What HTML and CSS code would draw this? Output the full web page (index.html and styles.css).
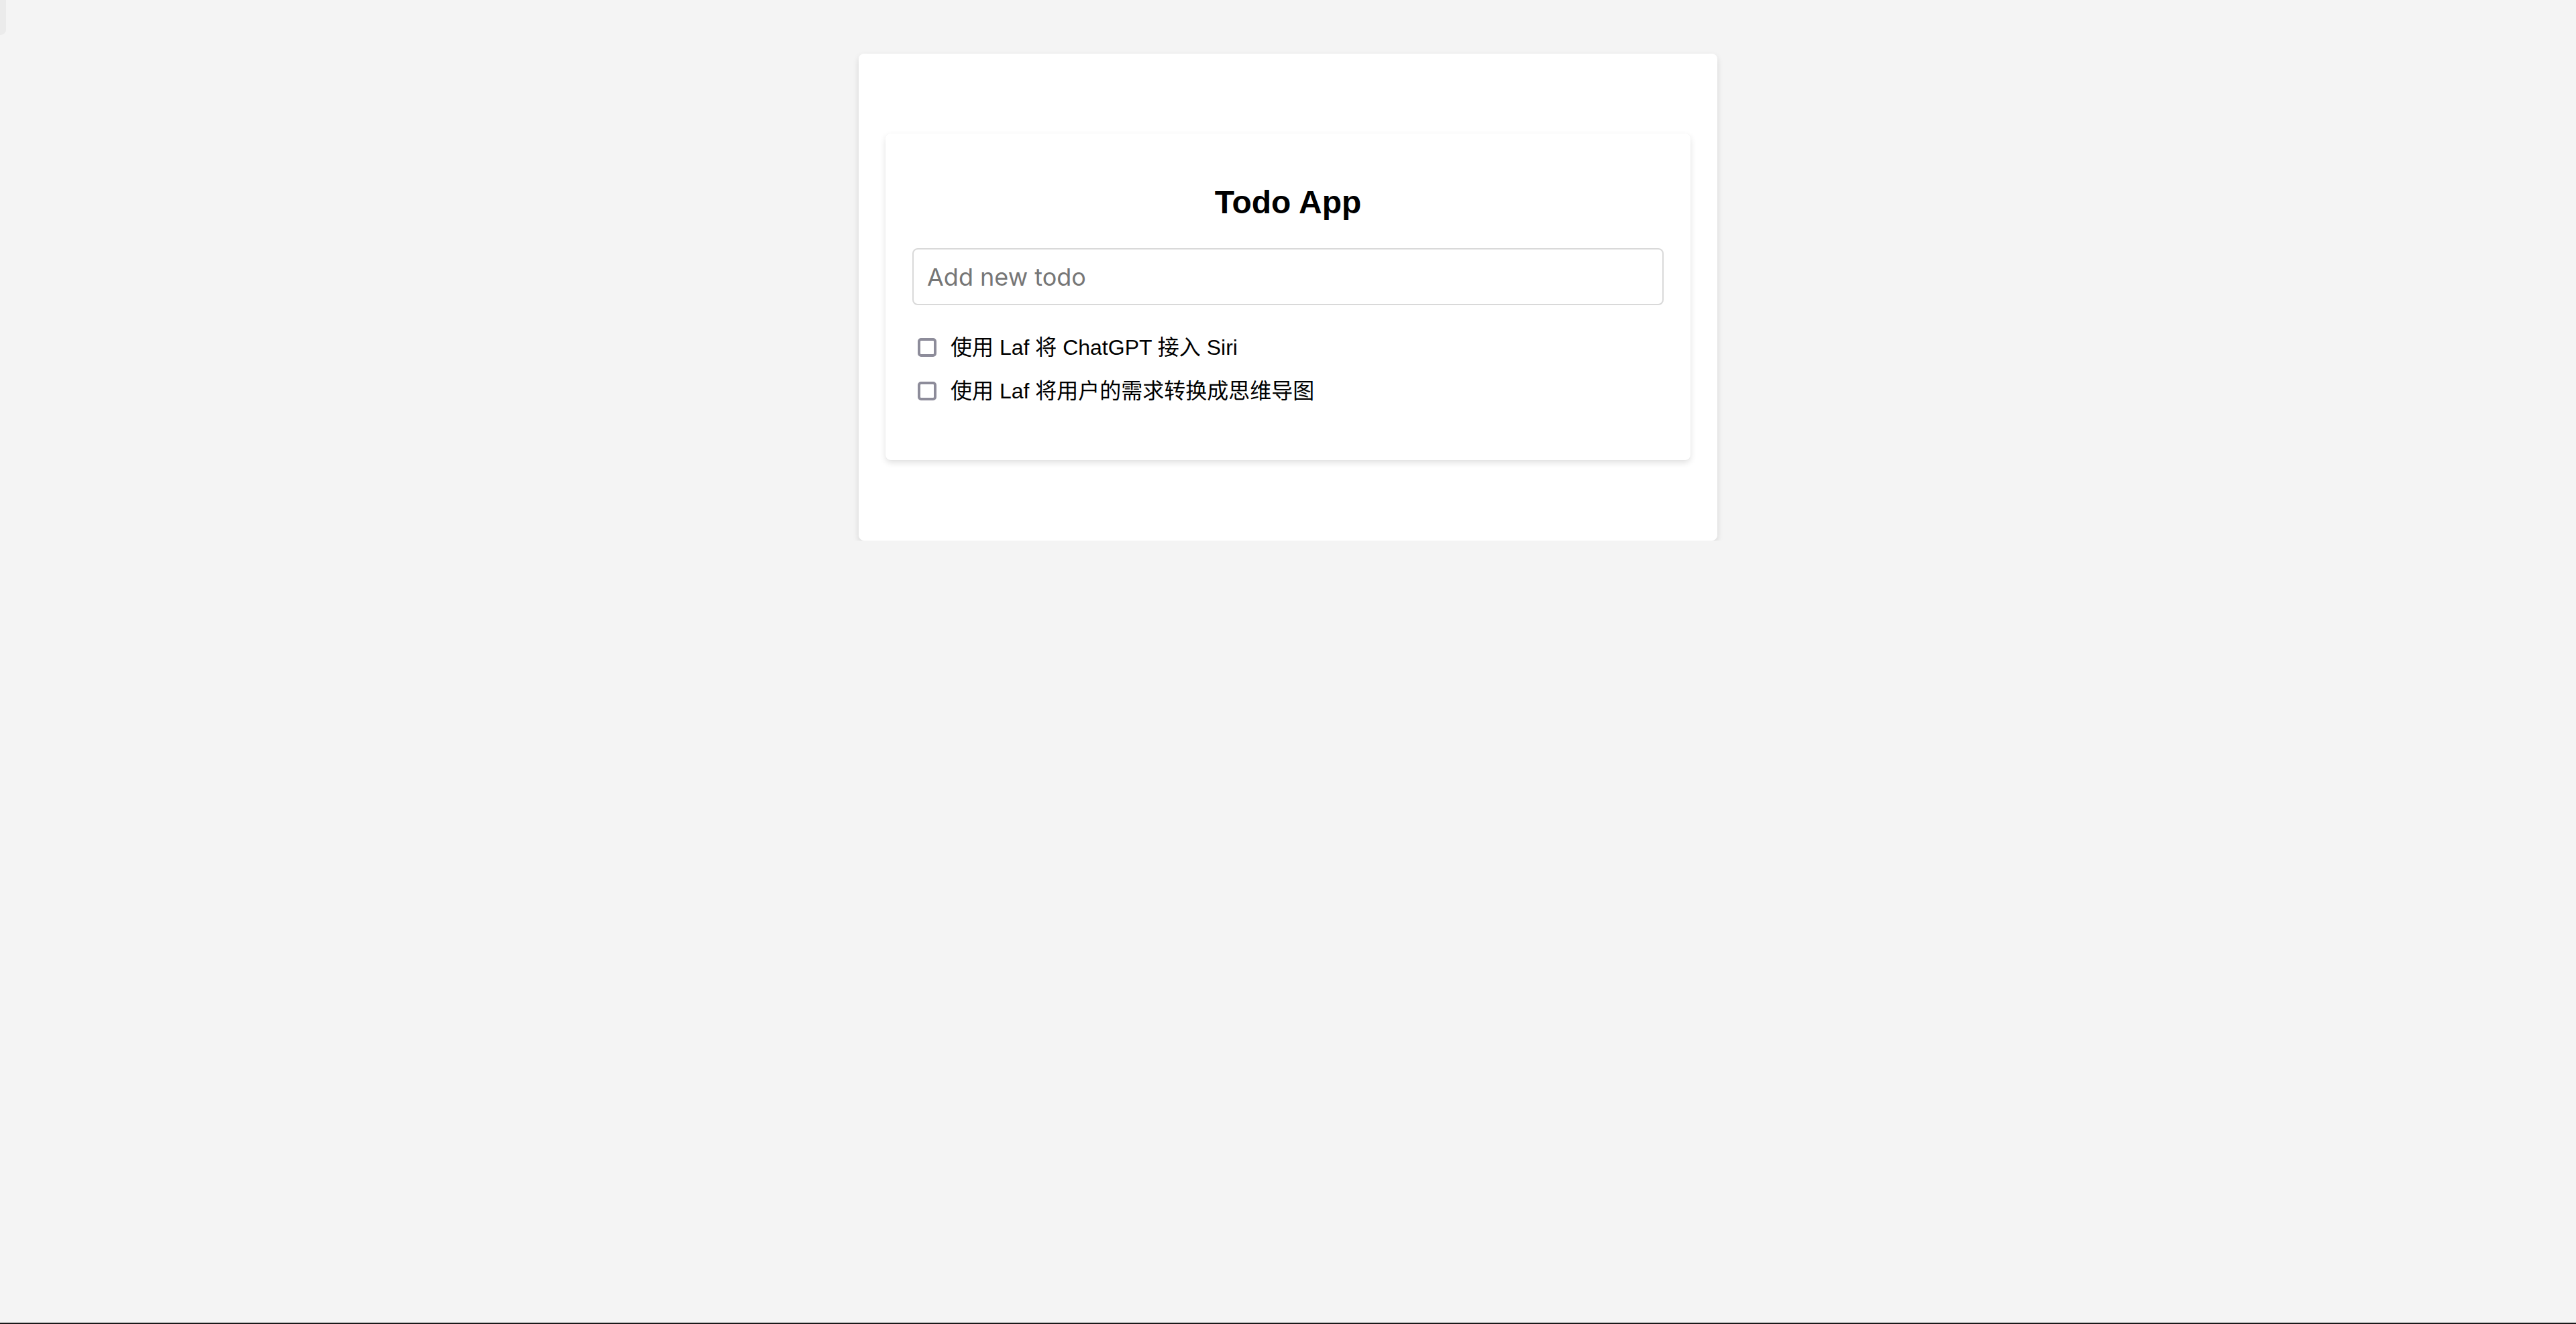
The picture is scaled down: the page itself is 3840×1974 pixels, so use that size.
FILE: index.html
```html
<!DOCTYPE html>
<html lang="zh">
<head>
    <meta charset="UTF-8">
    <meta name="viewport" content="width=device-width, initial-scale=1.0">
    <title>Todo App</title>
    <link rel="stylesheet" href="styles.css">
</head>
<body>
    <div class="side-tab"></div>

    <div class="page">
        <div class="todo-card">
            <h2>Todo App</h2>
            <input type="text" id="new-todo" class="new-todo" placeholder="Add new todo">
            <ul id="todo-list" class="todo-list">
                <li class="todo-item">
                    <input type="checkbox" class="todo-check">
                    <span class="todo-text">使用 Laf 将 ChatGPT 接入 Siri</span>
                </li>
                <li class="todo-item">
                    <input type="checkbox" class="todo-check">
                    <span class="todo-text">使用 Laf 将用户的需求转换成思维导图</span>
                </li>
            </ul>
        </div>
    </div>

    <div class="bottom-line"></div>

    <script>
        document.addEventListener('DOMContentLoaded', function() {
            const input = document.getElementById('new-todo');
            const list = document.getElementById('todo-list');

            input.addEventListener('keyup', function(e) {
                if (e.key !== 'Enter') return;
                const text = input.value.trim();
                if (!text) return;
                const li = document.createElement('li');
                li.className = 'todo-item';
                li.innerHTML = '<input type="checkbox" class="todo-check"><span class="todo-text"></span>';
                li.querySelector('.todo-text').textContent = text;
                list.appendChild(li);
                input.value = '';
            });
        });
    </script>
</body>
</html>
```

FILE: styles.css
```css
body {
    margin: 0;
    background-color: #f4f4f4;
    font-family: "Liberation Sans", "Noto Sans CJK SC", sans-serif;
    color: #000;
}

/* 左上角的小标签 */
.side-tab {
    position: fixed;
    top: 0;
    left: 0;
    width: 9px;
    height: 52px;
    background-color: #ebebeb;
    border-radius: 0 0 8px 0;
}

.page {
    width: 1280px;
    margin: 80px auto 0;
    padding: 119px 40px 120px;
    box-sizing: border-box;
    background-color: #fff;
    border-radius: 8px;
    box-shadow: 0 4px 10px rgba(0, 0, 0, 0.12);
}

.todo-card {
    padding: 40px;
    background-color: #fff;
    border-radius: 8px;
    box-shadow: 0 4px 10px rgba(0, 0, 0, 0.12), 0 0 2px rgba(0, 0, 0, 0.03);
}

.todo-card h2 {
    margin: 35px 0 41px;
    font-size: 48px;
    line-height: 55px;
    font-weight: bold;
    text-align: center;
}

.new-todo {
    display: block;
    width: 100%;
    height: 85px;
    margin: 0;
    padding: 0 20px;
    box-sizing: border-box;
    border: 2px solid #d9d9d9;
    border-radius: 8px;
    font-family: Inter, "Noto Sans CJK SC", sans-serif;
    font-size: 36px;
    color: #333;
    outline: none;
}

.new-todo::placeholder {
    color: #767676;
}

.todo-list {
    list-style: none;
    margin: 30px 0 31px;
    padding: 0;
}

.todo-item {
    display: flex;
    align-items: center;
    height: 65px;
    padding-left: 8px;
    font-size: 32px;
}

.todo-check {
    appearance: none;
    -webkit-appearance: none;
    flex-shrink: 0;
    width: 28px;
    height: 28px;
    margin: 0 21px 0 0;
    border: 4px solid #8d8c9a;
    border-radius: 5px;
    background-color: #fff;
    box-sizing: border-box;
    cursor: pointer;
}

.todo-check:checked {
    background-color: #8d8c9a;
}

.todo-text {
    line-height: 40px;
    color: #000;
}

.bottom-line {
    position: fixed;
    left: 0;
    right: 0;
    bottom: 0;
    height: 2px;
    background-color: #1a1a1a;
}
```
